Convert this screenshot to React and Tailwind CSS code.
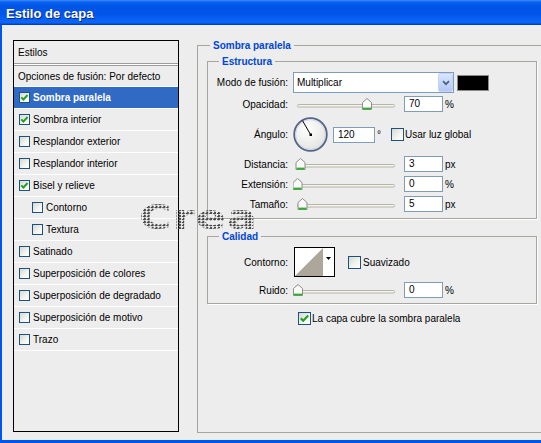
import React from "react";

function Check({ checked, small }) {
  return (
    <span
      className={
        (small ? "w-[11px] h-[11px]" : "w-[13px] h-[13px]") +
        " shrink-0 border border-[#1c5180] bg-[linear-gradient(135deg,#d8d8d2_0%,#f4f4f0_60%,#ffffff_100%)] flex items-center justify-center"
      }
    >
      {checked &&
        (small ? (
          <svg width="9" height="9" viewBox="0 0 9 9">
            <path d="M1.3 4.3 L3.4 6.5 L7.6 2" fill="none" stroke="#21a121" strokeWidth="1.9" />
          </svg>
        ) : (
          <svg width="11" height="11" viewBox="0 0 11 11">
            <path d="M1.8 5.2 L4.2 7.8 L9.2 2.6" fill="none" stroke="#21a121" strokeWidth="2.1" />
          </svg>
        ))}
    </span>
  );
}

function Slider({ pos }) {
  return (
    <svg width="106" height="16" className="ml-[5px] shrink-0">
      <rect x="4.5" y="8.5" width="97" height="2.5" rx="1.2" fill="#f6f6ee" stroke="#b4b4aa" strokeWidth="1" />
      <g transform={`translate(${pos - 5},2)`}>
        <path d="M0.5 11.5V4.5L5 0.5L9.5 4.5V11.5Z" fill="#fafafa" stroke="#8e8e86" />
        <rect x="1" y="9.6" width="8" height="1.9" fill="#2db22d" />
      </g>
    </svg>
  );
}

function Input({ value, w }) {
  return (
    <div
      className={
        (w === 42 ? "w-[42px]" : "w-[39px]") +
        " h-[16px] shrink-0 border border-[#7f9db9] bg-white pl-[4px] leading-[14px]"
      }
    >
      {value}
    </div>
  );
}

function Label({ children }) {
  return <div className="w-[80px] shrink-0 text-right">{children}</div>;
}

function SliderRow({ label, pos, value, unit }) {
  return (
    <div className="flex items-center h-[16px]">
      <Label>{label}</Label>
      <Slider pos={pos} />
      <div className="ml-[5px]">
        <Input value={value} />
      </div>
      <span className="ml-[2px]">{unit}</span>
    </div>
  );
}

const items = [
  { label: "Sombra paralela", checked: true, selected: true },
  { label: "Sombra interior", checked: true },
  { label: "Resplandor exterior" },
  { label: "Resplandor interior" },
  { label: "Bisel y relieve", checked: true },
  { label: "Contorno", indent: true },
  { label: "Textura", indent: true },
  { label: "Satinado" },
  { label: "Superposición de colores" },
  { label: "Superposición de degradado" },
  { label: "Superposición de motivo" },
  { label: "Trazo" },
];

export default function App() {
  return (
    <div className="relative w-[541px] h-[443px] overflow-hidden bg-[#0055ea] flex flex-col font-['Liberation_Sans',Arial,sans-serif] text-[10px] text-black">
      {/* title bar */}
      <div className="h-[25px] shrink-0 flex items-center pl-[6px] bg-[linear-gradient(to_bottom,#3d8ef9_0px,#0b62ef_2px,#0054e6_6px,#0055e8_14px,#0b64f5_21px,#0a66f8_23px,#0043cc_24px,#0039bd_25px)]">
        <span className="text-white font-bold text-[13px] leading-none [text-shadow:1px_1px_0_#0a2a8a] mt-[1px]">
          Estilo de capa
        </span>
      </div>

      {/* body */}
      <div className="flex-1 ml-[2px] mb-[3px] bg-[#ededed] flex pt-[14px]">
        {/* left list */}
        <div className="ml-[11px] mt-[1px] w-[166px] h-[392px] shrink-0 border border-black flex flex-col">
          <div className="h-[22px] flex items-center pl-[4px]">Estilos</div>
          <div className="h-[3px] border-y border-[#9c9c9c] bg-white" />
          <div className="h-[21px] flex items-center pl-[4px] border-b border-white">
            Opciones de fusión: Por defecto
          </div>
          {items.map((it) => (
            <div
              key={it.label}
              className={
                "h-[22px] flex items-center border-b border-white " +
                (it.indent ? "pl-[18px] " : "pl-[5px] ") +
                (it.selected ? "bg-[#316ac5] text-white font-bold" : "")
              }
            >
              <Check small checked={it.checked} />
              <span className="ml-[3px] whitespace-nowrap">{it.label}</span>
            </div>
          ))}
        </div>

        {/* right panel */}
        <fieldset className="ml-[18px] w-[360px] h-[394px] shrink-0 border border-[#a6a69e] pl-[9px] pt-[3px]">
          <legend className="ml-[3px] px-[3px] text-[#0046d5] font-bold leading-[13px]">Sombra paralela</legend>

          {/* Estructura */}
          <fieldset className="w-[330px] border border-[#a6a69e] shadow-[1px_1px_0_#ffffff] pt-[4px] pb-[6px]">
            <legend className="ml-[11px] px-[3px] text-[#0046d5] font-bold leading-[13px]">Estructura</legend>

            <div className="flex items-center h-[21px]">
              <Label>Modo de fusión:</Label>
              <div className="ml-[5px] w-[161px] h-[21px] shrink-0 border border-[#7f9db9] bg-white flex items-center">
                <span className="pl-[3px] flex-1">Multiplicar</span>
                <div className="w-[15px] h-[19px] rounded-[2px] border border-[#c3d4fb] bg-[linear-gradient(to_bottom,#dbe6fd,#b3c7f6)] flex items-center justify-center">
                  <svg width="8" height="6" viewBox="0 0 8 6">
                    <path d="M1 1.2 L4 4.2 L7 1.2" fill="none" stroke="#4d6185" strokeWidth="1.8" />
                  </svg>
                </div>
              </div>
              <div className="ml-[3px] w-[32px] h-[16px] border border-[#8a8a8a] bg-black" />
            </div>

            <div className="mt-[3px]">
              <SliderRow label="Opacidad:" pos={74} value="70" unit="%" />
            </div>

            <div className="mt-[5px] flex items-center h-[35px]">
              <Label>Ángulo:</Label>
              <svg width="35" height="35" viewBox="0 0 35 35" className="ml-[5px] shrink-0">
                <defs>
                  <radialGradient id="dialg" cx="40%" cy="35%" r="70%">
                    <stop offset="0%" stopColor="#ffffff" />
                    <stop offset="100%" stopColor="#e2e2de" />
                  </radialGradient>
                </defs>
                <circle cx="17.5" cy="17.5" r="16.3" fill="url(#dialg)" stroke="#55648a" strokeWidth="1.8" />
                <circle cx="17.5" cy="17.5" r="14.9" fill="none" stroke="#c9cfdc" strokeWidth="0.8" />
                <line x1="17.5" y1="17.5" x2="9.5" y2="3.6" stroke="#000" strokeWidth="1" />
                <rect x="16.5" y="16.5" width="2.5" height="2.5" fill="#000" />
              </svg>
              <div className="ml-[5px]">
                <Input value="120" w={42} />
              </div>
              <span className="ml-[2px] w-[14px]">°</span>
              <Check />
              <span className="ml-[1px]">Usar luz global</span>
            </div>

            <div className="mt-[4px]">
              <SliderRow label="Distancia:" pos={7.5} value="3" unit="px" />
            </div>
            <div className="mt-[4px]">
              <SliderRow label="Extensión:" pos={4.5} value="0" unit="%" />
            </div>
            <div className="mt-[4px]">
              <SliderRow label="Tamaño:" pos={9.5} value="5" unit="px" />
            </div>
          </fieldset>

          {/* Calidad */}
          <fieldset className="mt-[11px] w-[330px] border border-[#a6a69e] shadow-[1px_1px_0_#ffffff] pt-[4px] pb-[5px]">
            <legend className="ml-[11px] px-[3px] text-[#0046d5] font-bold leading-[13px]">Calidad</legend>

            <div className="flex items-center h-[30px]">
              <Label>Contorno:</Label>
              <div className="ml-[6px] w-[41px] h-[30px] shrink-0 border border-black bg-white flex">
                <svg width="28" height="28" viewBox="0 0 28 28">
                  <polygon points="0,28 28,0 28,28" fill="#aca799" />
                </svg>
                <div className="flex-1 flex justify-center pt-[9px]">
                  <svg width="5" height="3" viewBox="0 0 5 3">
                    <polygon points="0,0 5,0 2.5,3" fill="#000" />
                  </svg>
                </div>
              </div>
              <div className="ml-[13px]">
                <Check />
              </div>
              <span className="ml-[2px]">Suavizado</span>
            </div>

            <div className="mt-[5px]">
              <SliderRow label="Ruido:" pos={5} value="0" unit="%" />
            </div>
          </fieldset>

          <div className="mt-[8px] ml-[91px] flex items-center h-[13px]">
            <Check checked />
            <span className="ml-[1px]">La capa cubre la sombra paralela</span>
          </div>
        </fieldset>
      </div>

      {/* dotted watermark */}
      <div className="absolute left-[139px] top-[200px] pointer-events-none origin-left scale-x-[1.3] font-['DejaVu_Sans',sans-serif] font-bold text-[34px] leading-none tracking-[1px] text-transparent bg-clip-text bg-[radial-gradient(circle_at_45%_45%,#4a4a4a_1px,transparent_1.3px)] bg-[length:3px_3px]">
        Crea
      </div>
    </div>
  );
}
